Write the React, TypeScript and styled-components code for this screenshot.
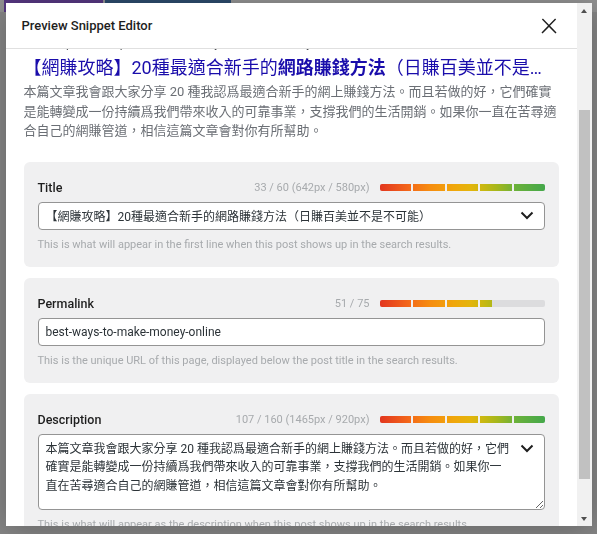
import React, { useLayoutEffect, useRef } from "react";
import styled, { createGlobalStyle } from "styled-components";
import { Monitor, Smartphone } from "lucide-react";

const GlobalStyle = createGlobalStyle`
  html, body { margin: 0; padding: 0; }
  body {
    width: 597px;
    height: 534px;
    overflow: hidden;
    font-family: Roboto, "Noto Sans CJK TC", sans-serif;
  }
  * { box-sizing: border-box; }
`;

const Page = styled.div`
  width: 597px;
  height: 534px;
  background: #dedede;
`;

const TopNav = styled.div`
  display: flex;
  height: 12px;
  gap: 2px;
  padding-left: 4px;
  background: #f3f3f3;
`;

const NavBlock = styled.div<{ $w: number; $c: string }>`
  width: ${(p) => p.$w}px;
  background: ${(p) => p.$c};
`;

const Overlay = styled.div`
  position: fixed;
  inset: 0;
  background: rgba(0, 0, 0, 0.4);
  display: flex;
  justify-content: center;
  align-items: flex-start;
  padding-top: 3px;
`;

const Modal = styled.div`
  width: 586px;
  height: 523px;
  background: #fff;
  display: flex;
  box-shadow: 0 3px 30px rgba(0, 0, 0, 0.25);
`;

const Scroller = styled.div`
  flex: 1;
  min-width: 0;
  overflow-y: auto;
  scrollbar-width: none;
  &::-webkit-scrollbar {
    display: none;
  }
`;

const ScrollBar = styled.div`
  width: 15px;
  flex: none;
  display: flex;
  flex-direction: column;
  background: #f1f1f1;
`;

const ScrollArrow = styled.div<{ $down?: boolean }>`
  height: 15px;
  flex: none;
  display: flex;
  align-items: center;
  justify-content: center;
  &::after {
    content: "";
    width: 0;
    height: 0;
    border-left: 3.5px solid transparent;
    border-right: 3.5px solid transparent;
    ${(p) =>
      p.$down
        ? "border-top: 4px solid #505050;"
        : "border-bottom: 4px solid #505050;"}
  }
`;

const ScrollTrack = styled.div`
  flex: 1;
  padding: 0 2px;
`;

const ScrollThumb = styled.div`
  background: #c1c1c1;
`;

const Header = styled.div`
  position: sticky;
  top: 0;
  z-index: 2;
  height: 46px;
  background: #fff;
  border-bottom: 1px solid #e0e0e0;
  display: flex;
  align-items: center;
  justify-content: space-between;
  padding: 0 16px;
`;

const HeaderTitle = styled.h1`
  margin: 0;
  font-size: 13px;
  font-weight: 500;
  color: #1e1e1e;
`;

const CloseButton = styled.button`
  width: 24px;
  height: 24px;
  border: none;
  background: none;
  padding: 0;
  display: flex;
  align-items: center;
  justify-content: center;
  color: #1e1e1e;
`;

const Body = styled.div`
  padding: 24px 18px 25px;
`;

const PreviewTabs = styled.div`
  height: 36px;
  display: flex;
  gap: 8px;
  margin-bottom: 20px;
`;

const PreviewTab = styled.button<{ $active?: boolean }>`
  width: 40px;
  height: 36px;
  padding: 0;
  border: 1px solid #ccc;
  border-radius: 4px;
  display: flex;
  align-items: center;
  justify-content: center;
  background: ${(p) => (p.$active ? "#f0f0f1" : "#fff")};
  color: #50575e;
`;

const SiteRow = styled.div`
  height: 53px;
  display: flex;
  align-items: flex-end;
  gap: 10px;
`;

const Favicon = styled.div`
  width: 18px;
  height: 18px;
  margin-bottom: 8px;
  border-radius: 50%;
  background: #e8eaed;
`;

const SiteUrl = styled.span`
  font-size: 12px;
  line-height: 18px;
  color: #4d5156;
`;

const SerpTitle = styled.a`
  display: block;
  margin-top: 4px;
  font-size: 18px;
  line-height: 24px;
  color: #1a0dab;
  white-space: nowrap;
  overflow: hidden;
  text-overflow: ellipsis;
  text-decoration: none;
`;

const SerpDesc = styled.p`
  margin: 2px 0 0;
  font-size: 13px;
  line-height: 19.5px;
  color: #6b6f75;
`;

const Cards = styled.div`
  display: flex;
  flex-direction: column;
  gap: 11px;
  margin-top: 21px;
`;

const Card = styled.section`
  background: #f0f0f1;
  border-radius: 6px;
  padding: 15px 14px 13px;
`;

const CardHeader = styled.div`
  display: flex;
  align-items: center;
  height: 22px;
  margin-bottom: 3px;
`;

const Label = styled.label`
  flex: 1;
  font-size: 12.5px;
  font-weight: 500;
  color: #1e1e1e;
`;

const Counter = styled.span`
  font-size: 11px;
  color: #a7aaad;
  margin-right: 10px;
`;

const Track = styled.div`
  width: 165px;
  height: 7px;
  border-radius: 2px;
  background: #dcdcde;
  overflow: hidden;
`;

const Fill = styled.div`
  height: 100%;
  background-image: repeating-linear-gradient(
      90deg,
      transparent 0 31.4px,
      #f0f0f1 31.4px 33.4px
    ),
    linear-gradient(
      90deg,
      #e2361f 0%,
      #f3661a 17%,
      #f68c10 30%,
      #f0a70b 45%,
      #e3b50c 55%,
      #c7b811 63%,
      #a5b71c 71%,
      #6bb13a 82%,
      #44a84b 100%
    );
  background-size: 165px 100%;
  background-repeat: no-repeat;
`;

const FieldBox = styled.div`
  display: flex;
  align-items: center;
  height: 28px;
  background: #fff;
  border: 1px solid #949494;
  border-radius: 4px;
`;

const TextInput = styled.input`
  flex: 1;
  min-width: 0;
  height: 100%;
  border: none;
  outline: none;
  background: transparent;
  padding: 0 7px;
  font-family: inherit;
  font-size: 12px;
  color: #2c3338;
`;

const ChevronButton = styled.button`
  width: 34px;
  height: 100%;
  border: none;
  background: none;
  padding: 0;
  display: flex;
  align-items: center;
  justify-content: center;
  color: #1e1e1e;
`;

const AreaWrap = styled.div`
  position: relative;
`;

const TextArea = styled.textarea`
  display: block;
  width: 100%;
  height: 76px;
  border: 1px solid #949494;
  border-radius: 4px;
  background: #fff;
  padding: 5px 32px 5px 7px;
  font-family: inherit;
  font-size: 12px;
  line-height: 18.5px;
  color: #2c3338;
  resize: vertical;
  outline: none;
`;

const AreaChevron = styled(ChevronButton)`
  position: absolute;
  top: 10px;
  right: 11px;
  width: 14px;
  height: 9px;
`;

const Help = styled.p`
  margin: 6px 0 0;
  font-size: 11px;
  line-height: 18px;
  color: #a7aaad;
`;

const Chevron = () => (
  <svg width="14" height="9" viewBox="0 0 14 9" fill="none">
    <path d="M1.5 1.5 L7 7 L12.5 1.5" stroke="currentColor" strokeWidth="2" />
  </svg>
);

const CloseIcon = () => (
  <svg width="24" height="24" viewBox="0 0 24 24">
    <path
      fill="currentColor"
      d="M13 11.8l6.1-6.3-1-1-6.1 6.2-6.1-6.2-1 1 6.1 6.3-6.5 6.7 1 1 6.5-6.6 6.5 6.6 1-1z"
    />
  </svg>
);

const Meter = ({ ratio }: { ratio: number }) => (
  <Track>
    <Fill style={{ width: `${Math.min(1, ratio) * 100}%` }} />
  </Track>
);

const TITLE = "【網賺攻略】20種最適合新手的網路賺錢方法（日賺百美並不是不可能）";
const DESC =
  "本篇文章我會跟大家分享 20 種我認爲最適合新手的網上賺錢方法。而且若做的好，它們確實是能轉變成一份持續爲我們帶來收入的可靠事業，支撐我們的生活開銷。如果你一直在苦尋適合自己的網賺管道，相信這篇文章會對你有所幫助。";

const SCROLL_TOP = 130;
const VIEW_H = 523;
const CONTENT_H = 699;
const TRACK_H = VIEW_H - 30;

export default function App() {
  const scrollRef = useRef<HTMLDivElement>(null);
  useLayoutEffect(() => {
    if (scrollRef.current) scrollRef.current.scrollTop = SCROLL_TOP;
  }, []);

  const thumbTop = (TRACK_H * SCROLL_TOP) / CONTENT_H;
  const thumbH = (TRACK_H * VIEW_H) / CONTENT_H;

  return (
    <>
      <GlobalStyle />
      <Page>
        <TopNav>
          <NavBlock $w={99} $c="#8f5bd6" />
          <NavBlock $w={126} $c="#497db3" />
        </TopNav>
      </Page>
      <Overlay>
        <Modal>
          <Scroller ref={scrollRef}>
            <Header>
              <HeaderTitle>Preview Snippet Editor</HeaderTitle>
              <CloseButton aria-label="Close">
                <CloseIcon />
              </CloseButton>
            </Header>
            <Body>
              <PreviewTabs>
                <PreviewTab $active aria-label="Desktop preview">
                  <Monitor size={16} />
                </PreviewTab>
                <PreviewTab aria-label="Mobile preview">
                  <Smartphone size={16} />
                </PreviewTab>
              </PreviewTabs>
              <SiteRow>
                <Favicon />
                <SiteUrl>https://example.com › best-ways-to-make-money-online</SiteUrl>
              </SiteRow>
              <SerpTitle href="#">
                【網賺攻略】20種最適合新手的<strong>網路賺錢方法</strong>（日賺百美並不是不可能）
              </SerpTitle>
              <SerpDesc>{DESC}</SerpDesc>

              <Cards>
                <Card>
                  <CardHeader>
                    <Label>Title</Label>
                    <Counter>33 / 60 (642px / 580px)</Counter>
                    <Meter ratio={642 / 580} />
                  </CardHeader>
                  <FieldBox>
                    <TextInput defaultValue={TITLE} />
                    <ChevronButton aria-label="Insert variable">
                      <Chevron />
                    </ChevronButton>
                  </FieldBox>
                  <Help>
                    This is what will appear in the first line when this post shows up in the search results.
                  </Help>
                </Card>

                <Card>
                  <CardHeader>
                    <Label>Permalink</Label>
                    <Counter>51 / 75</Counter>
                    <Meter ratio={51 / 75} />
                  </CardHeader>
                  <FieldBox>
                    <TextInput defaultValue="best-ways-to-make-money-online" />
                  </FieldBox>
                  <Help>
                    This is the unique URL of this page, displayed below the post title in the search results.
                  </Help>
                </Card>

                <Card>
                  <CardHeader>
                    <Label>Description</Label>
                    <Counter>107 / 160 (1465px / 920px)</Counter>
                    <Meter ratio={1465 / 920} />
                  </CardHeader>
                  <AreaWrap>
                    <TextArea defaultValue={DESC} />
                    <AreaChevron aria-label="Insert variable">
                      <Chevron />
                    </AreaChevron>
                  </AreaWrap>
                  <Help>
                    This is what will appear as the description when this post shows up in the search results.
                  </Help>
                </Card>
              </Cards>
            </Body>
          </Scroller>
          <ScrollBar>
            <ScrollArrow />
            <ScrollTrack>
              <ScrollThumb style={{ marginTop: thumbTop, height: thumbH }} />
            </ScrollTrack>
            <ScrollArrow $down />
          </ScrollBar>
        </Modal>
      </Overlay>
    </>
  );
}
